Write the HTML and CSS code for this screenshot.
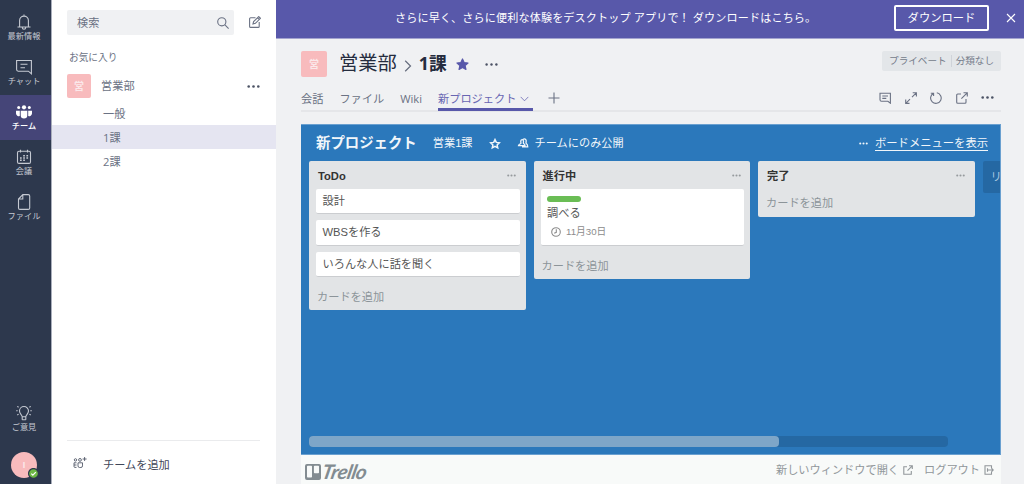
FILE: index.html
```html
<!DOCTYPE html>
<html lang="ja">
<head>
<meta charset="utf-8">
<title>新プロジェクト</title>
<link rel="stylesheet" href="styles.css">
</head>
<body>
<div class="app">
  <nav class="rail">
    <a class="rail-item">
      <svg class="rail-icon" viewBox="0 0 16 16"><path d="M1.500 13h13M3.600 12.800V6.500a4.400 4.400 0 0 1 8.800 0v6.300M8 2V.5M6.300 13.500a1.700 1.700 0 0 0 3.400 0"/></svg>
      <span>最新情報</span>
    </a>
    <a class="rail-item">
      <svg class="rail-icon" viewBox="0 0 16 16"><path d="M.6 1.500h14.800v13.300l-3-2.600H2.200a1.600 1.600 0 0 1-1.600-1.600zM4.500 5.300h7M4.500 8.700h4.500"/></svg>
      <span>チャット</span>
    </a>
    <a class="rail-item active">
      <svg class="rail-icon solid" viewBox="0 0 16 16"><circle cx="8" cy="3.300" r="2.100"/><circle cx="2.700" cy="3.600" r="1.500"/><circle cx="13.300" cy="3.600" r="1.500"/><path d="M4.700 6.800h6.600v4.400a3.300 3.300 0 0 1-6.600 0zM0 6.800h3.800v5.300A3 3 0 0 1 0 9.500zM16 6.800h-3.800v5.300A3 3 0 0 0 16 9.500z"/></svg>
      <span>チーム</span>
    </a>
    <a class="rail-item">
      <svg class="rail-icon" viewBox="0 0 16 16"><rect x="1.500" y="2.200" width="13" height="12.200" rx="1.500"/><path d="M4.500.8v2.700M11.500.8v2.700"/><path class="dots" d="M7.200 6.700h1.700M10.400 6.700h1.700M4 9h1.700M7.200 9h1.700M10.400 9h1.700M4 11.300h1.700M7.200 11.300h1.700"/></svg>
      <span>会議</span>
    </a>
    <a class="rail-item">
      <svg class="rail-icon" viewBox="0 0 16 16"><path d="M6.800.6h5.400a1.500 1.500 0 0 1 1.500 1.500v11.800a1.500 1.500 0 0 1-1.500 1.500H4a1.500 1.500 0 0 1-1.500-1.500V5zM6.800.8V5H2.700"/></svg>
      <span>ファイル</span>
    </a>
    <a class="rail-item feedback">
      <svg class="rail-icon" viewBox="0 0 16 16"><path d="M6.200 11.800C6.200 9.900 3.500 8.900 3.500 6a4.500 4.500 0 0 1 9 0c0 2.900-2.700 3.900-2.700 5.800zM6.200 14.800h3.600M.2 5.700h1.500M14.300 5.700h1.500M1.300 1.400l1.300.9M14.700 1.400l-1.300.9M1.300 10l1.300-.9M14.700 10l-1.300-.9M6.200 11.800v2.900M9.800 11.800v2.900"/></svg>
      <span>ご意見</span>
    </a>
    <div class="me">I
      <svg class="presence" viewBox="0 0 10 10"><circle cx="5" cy="5" r="4.500"/><path d="M3 5.100l1.400 1.400L7.100 3.800"/></svg>
    </div>
  </nav>

  <aside class="side">
    <div class="search-row">
      <div class="search"><span>検索</span>
        <svg class="glass" viewBox="0 0 12 12"><circle cx="4.800" cy="4.800" r="4.100"/><path d="M7.700 7.700l3.900 3.900"/></svg>
      </div>
      <svg class="compose" viewBox="0 0 12 12"><path d="M6.500 1.800H1.600a1 1 0 0 0-1 1v7.600a1 1 0 0 0 1 1h7.600a1 1 0 0 0 1-1V6M4 8l.6-2.400L9.700.6l1.700 1.700-5 5zM8.600 1.800l1.600 1.600"/></svg>
    </div>
    <div class="section">お気に入り</div>
    <div class="team"><span class="tile">営</span><span class="team-name">営業部</span>
      <svg class="more" viewBox="0 0 13 3"><circle cx="1.700" cy="1.500" r="1.300"/><circle cx="6.500" cy="1.500" r="1.300"/><circle cx="11.300" cy="1.500" r="1.300"/></svg>
    </div>
    <div class="channel">一般</div>
    <div class="channel selected">1課</div>
    <div class="channel">2課</div>
    <div class="add-team">
      <svg class="add-team-icon" viewBox="0 0 14 12"><circle cx="2.500" cy="2.900" r="1.200"/><circle cx="7" cy="2.900" r="1.400"/><path d="M3.500 5.800H1v3.700q0 .9 1 .9h1.500M1 8h2.500M5 5.800h4.500v3.100a1.600 1.600 0 0 1-1.600 1.600H6.600A1.600 1.600 0 0 1 5 8.900zM11.600 0v4M9.600 2h4"/></svg>
      <span>チームを追加</span>
    </div>
  </aside>

  <main class="main">
    <div class="banner">
      <p>さらに早く、さらに便利な体験をデスクトップ アプリで！ ダウンロードはこちら。</p>
      <button class="download">ダウンロード</button>
      <svg class="close" viewBox="0 0 10 10"><path d="M1 1l8 8M9 1L1 9"/></svg>
    </div>

    <header class="heading">
      <span class="tile big">営</span>
      <span class="crumb">営業部</span>
      <svg class="crumb-sep" viewBox="0 0 8 12"><path d="M1.200.8L6.500 6l-5.300 5.200"/></svg>
      <strong class="crumb current">1課</strong>
      <svg class="fav" viewBox="0 0 12 12"><path d="M6 .9l1.500 3.300 3.600.4-2.700 2.400.8 3.600L6 8.800l-3.200 1.800.8-3.600L.9 4.600l3.600-.4z"/></svg>
      <svg class="more" viewBox="0 0 13 3"><circle cx="1.600" cy="1.500" r="1.200"/><circle cx="6.500" cy="1.500" r="1.200"/><circle cx="11.400" cy="1.500" r="1.200"/></svg>
      <div class="privacy"><span>プライベート</span><span class="class-label">分類なし</span></div>
    </header>

    <div class="tabs">
      <span class="tab">会話</span>
      <span class="tab">ファイル</span>
      <span class="tab">Wiki</span>
      <span class="tab on">新プロジェクト<svg class="caret" viewBox="0 0 9 6"><path d="M.7.9l3.800 3.900L8.300.9"/></svg></span>
      <svg class="plus" viewBox="0 0 12 12"><path d="M6 .5v11M.5 6h11"/></svg>
      <div class="tools">
        <svg viewBox="0 0 12 12"><path d="M1 1.200h10.400v10L8.900 9.200H2.500A1.500 1.500 0 0 1 1 7.700zM3.300 4H9M3.300 6.400h4"/></svg>
        <svg viewBox="0 0 12 12"><path d="M7.700.7h3.700v3.800M11.300.8L7 5.100M4.500 11.400H.7V7.600M.8 11.300L5 7.100"/></svg>
        <svg viewBox="0 0 12 12"><path d="M3.300 1.400a5.300 5.300 0 1 0 3.500-.6M3.600 4V1.200H.8"/></svg>
        <svg viewBox="0 0 12 12"><path d="M5 2H1.700a1 1 0 0 0-1 1v7.300a1 1 0 0 0 1 1H9a1 1 0 0 0 1-1V7M7.500.7h3.800v3.800M11.200.8L5.400 6.600"/></svg>
        <svg class="more" viewBox="0 0 13 3"><circle cx="1.700" cy="1.500" r="1.300"/><circle cx="6.500" cy="1.500" r="1.300"/><circle cx="11.300" cy="1.500" r="1.300"/></svg>
      </div>
    </div>

    <section class="board">
      <div class="board-head">
        <h1>新プロジェクト</h1>
        <span class="org">営業1課</span>
        <svg class="board-star" viewBox="0 0 12 12"><path d="M6 1.600l1.300 2.800 3 .4-2.200 2.100.6 3L6 8.400 3.300 9.900l.6-3-2.200-2.100 3-.4z"/></svg>
        <svg class="people" viewBox="0 0 12 10"><path d="M1.500 7.600c.1-1.300 1.600-1.500 2.300-2.100.4-.7-.2-1.500 0-2.700.3-1.500 2.400-1.500 2.700 0 .1 1.200-.4 2 0 2.700.7.500 1.500.7 1.500 2.100zM6 1.500c1.500-1.200 3.300-.4 3.200 1.500-.1 1.200-.5 1.700.1 2.500.8.600 1.400 1.200 1.400 3.300H5"/></svg>
        <span>チームにのみ公開</span>
        <a class="board-menu"><svg class="more" viewBox="0 0 13 3"><circle cx="1.800" cy="1.500" r="1.500"/><circle cx="6.500" cy="1.500" r="1.500"/><circle cx="11.200" cy="1.500" r="1.500"/></svg><span>ボードメニューを表示</span></a>
      </div>
      <div class="lists">
        <div class="list">
          <div class="list-head"><h2>ToDo</h2><svg class="more" viewBox="0 0 13 3"><circle cx="1.800" cy="1.500" r="1.500"/><circle cx="6.500" cy="1.500" r="1.500"/><circle cx="11.200" cy="1.500" r="1.500"/></svg></div>
          <div class="card">設計</div>
          <div class="card">WBSを作る</div>
          <div class="card">いろんな人に話を聞く</div>
          <div class="add-card">カードを追加</div>
        </div>
        <div class="list">
          <div class="list-head"><h2>進行中</h2><svg class="more" viewBox="0 0 13 3"><circle cx="1.800" cy="1.500" r="1.500"/><circle cx="6.500" cy="1.500" r="1.500"/><circle cx="11.200" cy="1.500" r="1.500"/></svg></div>
          <div class="card detailed">
            <i class="label"></i>
            <span>調べる</span>
            <div class="due"><svg viewBox="0 0 10 10"><circle cx="5" cy="5" r="4.300"/><path d="M5.300 2.300v3L3.200 6.200"/></svg>11月30日</div>
          </div>
          <div class="add-card">カードを追加</div>
        </div>
        <div class="list">
          <div class="list-head"><h2>完了</h2><svg class="more" viewBox="0 0 13 3"><circle cx="1.800" cy="1.500" r="1.500"/><circle cx="6.500" cy="1.500" r="1.500"/><circle cx="11.200" cy="1.500" r="1.500"/></svg></div>
          <div class="add-card short">カードを追加</div>
        </div>
        <div class="add-list">リ</div>
      </div>
      <div class="scroll"><div class="thumb"></div></div>
    </section>

    <footer class="foot">
      <svg class="trello-mark" viewBox="0 0 16 16"><path fill-rule="evenodd" d="M2 0h12a2 2 0 0 1 2 2v12a2 2 0 0 1-2 2H2a2 2 0 0 1-2-2V2a2 2 0 0 1 2-2zM2.800 1.700a.8.800 0 0 0-.8.800v10.300c0 .5.300.8.800.8h3.400c.5 0 .8-.3.800-.8V2.500a.8.800 0 0 0-.8-.8zM9.700 1.700a.8.800 0 0 0-.8.800v6c0 .5.300.8.800.8h3.500c.5 0 .8-.3.800-.8v-6a.8.800 0 0 0-.8-.8z"/></svg>
      <span class="trello">Trello</span>
      <a class="foot-link first">新しいウィンドウで開く<svg viewBox="0 0 10 10"><path d="M4 1.700H.8v7.500h7.500V6M6 .8h3.300v3.300M9.200.9L4.500 5.600"/></svg></a>
      <a class="foot-link">ログアウト<svg viewBox="0 0 10 10"><path d="M7.500 3V.7H1v8.600h6.500V7M3.500 5h5.700M7.400 3.200L9.200 5 7.400 6.800M3.500 3.200v3.600"/></svg></a>
    </footer>
  </main>
</div>
</body>
</html>
```

FILE: styles.css
```css
* { box-sizing: border-box; }
body { margin: 0; font-family: "Open Sans", "Noto Sans CJK JP", sans-serif; font-size: 11.200px; color: #6b7284; line-height: 16px; white-space: nowrap; }
svg { display: block; flex: none; fill: none; stroke: currentColor; stroke-width: 1.100; }
.app { display: flex; width: 1024px; height: 484px; overflow: hidden; background: #f0f1f3; }
.more { width: 13px; height: 3px; fill: currentColor; stroke: none; }

/* App rail */
.rail { width: 52px; flex: none; background: #2d384d; border-right: 1px solid #a9aebb; display: flex; flex-direction: column; padding-top: 5px; color: #c5c9d2; }
.rail-item { height: 45px; padding: 9px 3px 0 0; display: flex; flex-direction: column; align-items: center; font-size: 8.200px; line-height: 14px; }
.rail-icon { width: 16px; height: 16px; margin-bottom: -1px; }
.rail-icon.solid { fill: currentColor; stroke: none; }
.dots { stroke-width: 1.600; }
.rail-item.active { background: #454578; color: #fff; font-weight: 500; }
.feedback { margin-top: auto; height: 56px; }
.me { position: relative; width: 26px; height: 26px; margin: 0 0 6px 11px; border-radius: 50%; background: #f8bbbd; color: #fbe8ea; text-align: center; font-size: 9px; line-height: 26px; font-weight: 700; }
.presence { position: absolute; right: -2px; bottom: -1px; width: 11px; height: 11px; }
.presence circle { fill: #6cb644; stroke: #2d384d; }
.presence path { stroke: #fff; }

/* Team sidebar */
.side { width: 224px; flex: none; background: #fff; display: flex; flex-direction: column; padding-top: 10px; }
.search-row { display: flex; align-items: center; padding-left: 15px; }
.search { width: 167px; height: 25px; border-radius: 2px; background: #f0f1f3; display: flex; align-items: center; justify-content: space-between; padding: 0 5px 0 10px; }
.glass { width: 12px; height: 12px; }
.compose { width: 12px; height: 12px; margin-left: 15px; margin-top: -1px; }
.section { margin: 15px 0 0 17px; font-size: 9.700px; }
.team { display: flex; align-items: center; padding: 0 16px 0 15px; margin-top: 8px; height: 24px; }
.team .more { margin-left: auto; color: #4b5264; }
.team-name { margin: -1px 0 0 10px; }
.tile { width: 24px; height: 24px; border-radius: 2px; background: #f8bbbd; color: #fbe8ea; text-align: center; font-family: "Noto Sans CJK JP", sans-serif; font-size: 10px; line-height: 23px; font-weight: 700; }
.channel { height: 24px; line-height: 25px; padding-left: 51px; font-size: 11.200px; }
.team + .channel { margin-top: 3px; }
.channel.selected { background: #e5e5f1; }
.add-team { margin: auto 16px 0 15px; border-top: 1px solid #eaebed; height: 44px; display: flex; align-items: center; padding: 4px 0 0 6px; color: #3f4658; }
.add-team-icon { width: 14px; height: 12px; margin: -3px 16px 0 0; stroke-width: .8; }

/* Channel area */
.main { flex: 1; min-width: 0; display: flex; flex-direction: column; }
.banner { height: 39px; flex: none; background: #5858aa; border-bottom: 1px solid #a3a3cf; color: #fff; display: flex; align-items: center; padding: 0 8px 3px 119px; }
.banner p { margin: 0; font-size: 11.100px; letter-spacing: .13px; }
.download { margin: 0 17px 0 auto; width: 95px; height: 26px; padding: 0; border: 2px solid #fff; border-radius: 2px; background: none; color: #fff; font: inherit; font-size: 11.300px; }
.close { width: 10px; height: 10px; }
.heading { height: 26px; margin: 12px 23px 0 25px; display: flex; align-items: center; color: #252c3e; }
.tile.big { width: 26px; height: 26px; line-height: 25px; }
.crumb { font-size: 19.300px; line-height: 26px; margin: -2px 0 0 12px; }
.crumb-sep { width: 8px; height: 12px; margin: 3px 0 0 7px; color: #666d7d; stroke-width: 1.200; }
.crumb.current { font-size: 17.800px; margin-left: 7px; }
.fav { width: 13px; height: 13px; margin-left: 9px; color: #5858aa; fill: currentColor; stroke-linejoin: round; }
.heading .more { margin-left: 16px; color: #4b5264; }
.privacy { margin: -6px 0 0 auto; height: 20px; line-height: 20px; background: #e3e6e9; border-radius: 2px; font-size: 9.600px; color: #747b89; display: flex; align-items: center; padding: 0 7px; }
.class-label { margin-left: 4px; padding-left: 4px; border-left: 1px solid #cfd3d9; line-height: 12px; }
.tabs { height: 35px; flex: none; margin: 0 23px 0 25px; border-bottom: 2px solid #e5e6e9; display: flex; align-items: stretch; }
.tab { display: flex; align-items: center; padding-top: 11px; margin-right: 16px; }
.tab.on { position: relative; color: #6866b2; margin-right: 15px; }
.tab.on::after { content: ""; position: absolute; left: 0; right: 0; bottom: -1px; height: 3px; background: #5858aa; }
.caret { width: 9px; height: 6px; margin: 0 4px 0 4px; stroke-width: .8; }
.plus { width: 12px; height: 12px; margin-top: 15px; }
.tools { margin-left: auto; display: flex; align-items: center; gap: 13.500px; padding: 8px 7px 0 0; }
.tools svg { width: 12px; height: 12px; }
.tools .more { width: 13px; height: 3px; color: #4b5264; }

/* Board */
.board { height: 331px; flex: none; margin: 12px 23px 0 25px; background: #2b78bb; border: 1px solid #6aa0d0; border-left: 0; font-family: "Liberation Sans", "Noto Sans CJK JP", sans-serif; overflow: hidden; display: flex; flex-direction: column; }
.board-head { height: 36px; display: flex; align-items: center; color: #f1f6fa; padding: 0 12px 0 15px; }
h1 { margin: 0 16px 0 0; font-size: 14.400px; line-height: 18px; }
.board-star { width: 12px; height: 12px; margin: 1px 16px 0; stroke-width: 1.500; }
.people { width: 12px; height: 10px; margin-right: 6px; stroke-width: 1.300; }
.board-menu { margin-left: auto; display: flex; align-items: center; }
.board-menu .more { width: 9px; margin-right: 7px; }
.board-menu span { border-bottom: 1px solid; line-height: 14px; font-size: 11.300px; }
.lists { display: flex; align-items: flex-start; gap: 8px; padding-left: 8px; height: 275px; }
.list { width: 216.500px; flex: none; background: #e2e4e6; border-radius: 2px; padding: 0 6px 0 7px; color: #555; }
.list-head { height: 28px; display: flex; align-items: center; justify-content: space-between; padding: 0 3.500px 0 2px; color: #969a9d; }
.list-head .more { width: 9px; }
h2 { margin: 1px 0 0; font-size: 11.200px; color: #333; }
.card { height: 25.300px; line-height: 25px; margin-bottom: 6px; background: #fff; border-radius: 2px; border-bottom: 1px solid #cbcdd0; padding-left: 6.500px; }
.add-card { height: 28px; line-height: 28px; color: #8c9499; padding-left: 1px; }
.card + .add-card { height: 27.300px; }
.add-card.short { line-height: 29px; }
.card.detailed { height: 56.500px; padding-top: 7px; line-height: 21px; }
.label { display: block; width: 34px; height: 6px; background: #6abd55; border-radius: 3px; margin-bottom: 1px; }
.due { display: flex; align-items: center; gap: 5px; margin: 0 0 0 4px; font-size: 9.700px; line-height: 15px; color: #8c8c8c; }
.due svg { width: 10px; height: 10px; }
.add-list { width: 216px; height: 32px; flex: none; border-radius: 2px; background: #2568a3; color: #a9c7e0; line-height: 32px; padding-left: 8px; }
.scroll { width: 639px; height: 11px; margin-left: 8px; border-radius: 4px; background: #2568a3; }
.thumb { width: 470px; height: 11px; border-radius: 4px; background: #7ea6c8; }
.foot { flex: 1; margin: 0 23px 0 25px; background: #f8faf9; display: flex; align-items: center; color: #91979b; padding: 0 7px 0 4px; }
.trello-mark { width: 16px; height: 16px; fill: #838c91; stroke: none; margin-top: 5px; }
.trello { width: 48px; margin: 2px 0 0 1px; font: italic 700 20px/24px Lato, sans-serif; letter-spacing: -.5px; color: #838c91; transform: skewX(-12deg) scaleX(1.03); transform-origin: 0 60%; }
.foot-link { display: flex; align-items: center; }
.foot-link.first { margin-left: auto; margin-right: 11px; }
.foot-link svg { width: 10px; height: 10px; margin-left: 4px; }
```
